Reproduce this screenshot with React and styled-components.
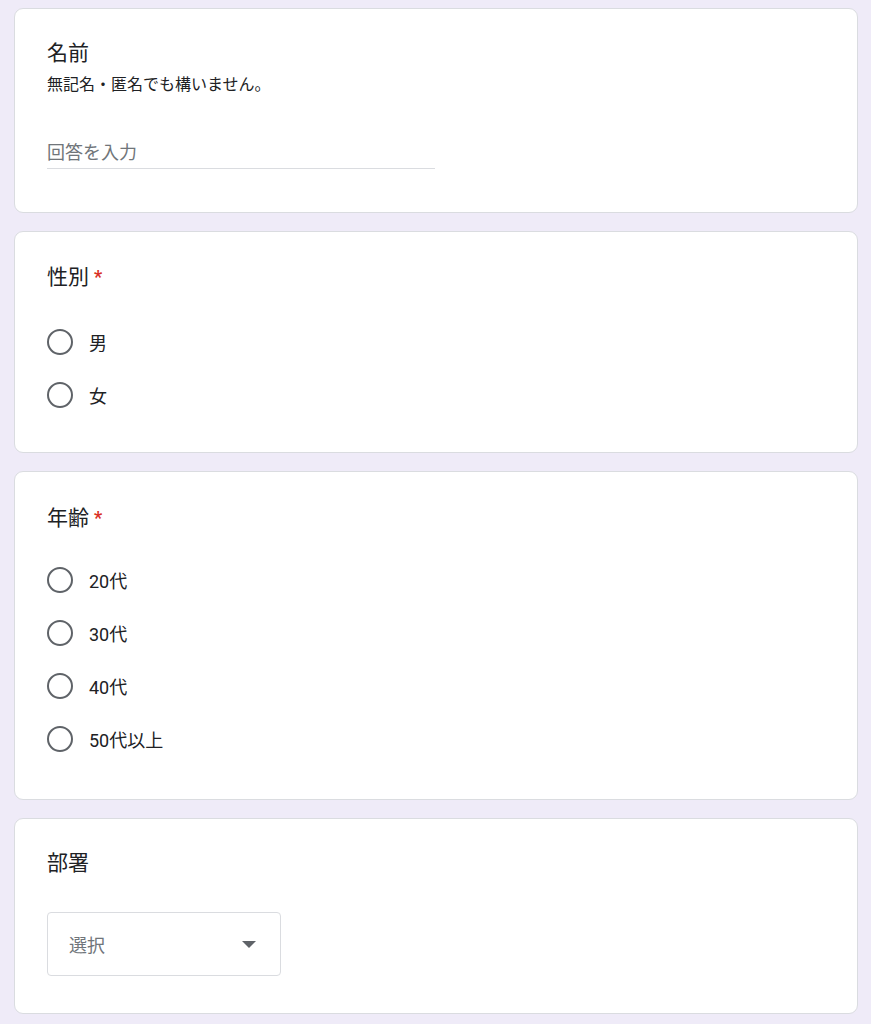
import { createGlobalStyle, styled } from "styled-components";

const GlobalStyle = createGlobalStyle`
  html, body {
    margin: 0;
    padding: 0;
    background: #efebf8;
    overflow: hidden;
  }
  body {
    font-family: Roboto, "Noto Sans CJK JP", sans-serif;
    color: #202124;
  }
`;

const Page = styled.div`
  display: flex;
  flex-direction: column;
  gap: 18px;
  padding: 8px 13px 0 14px;
`;

const Card = styled.section`
  background: #fff;
  border: 1px solid #dadce0;
  border-radius: 9px;
  padding: ${(p) => p.$top || 30}px 32px ${(p) => p.$bottom || 30}px;
`;

const Title = styled.h2`
  margin: 0;
  font-size: 21px;
  font-weight: 400;
  line-height: 28px;
  display: flex;
  align-items: center;
  gap: 5px;
`;

const Required = styled.span`
  color: #d93025;
  font-size: 18px;
  font-weight: 700;
`;

const Description = styled.p`
  margin: 8px 0 0;
  font-size: 16px;
  line-height: 20px;
`;

const TextInput = styled.input`
  display: block;
  margin-top: 45px;
  width: 388px;
  box-sizing: border-box;
  border: none;
  border-bottom: 1px solid #dadce0;
  padding: 0 0 4px;
  font-family: inherit;
  font-size: 18px;
  line-height: 24px;
  height: 29px;
  outline: none;
  color: #202124;
  &::placeholder {
    color: #70757a;
  }
`;

const Options = styled.div`
  display: flex;
  flex-direction: column;
  margin-top: ${(p) => p.$gap || 24}px;
`;

const Option = styled.label`
  display: flex;
  align-items: center;
  height: 53px;
  font-size: 18px;
  gap: 16px;
`;

const Radio = styled.span`
  width: 26px;
  height: 26px;
  box-sizing: border-box;
  border: 2px solid #5f6368;
  border-radius: 50%;
  flex-shrink: 0;
`;

const Select = styled.div`
  margin-top: 35px;
  width: 234px;
  height: 64px;
  box-sizing: border-box;
  border: 1px solid #dadce0;
  border-radius: 4px;
  display: flex;
  align-items: center;
  justify-content: space-between;
  padding: 0 24px 0 21px;
  font-size: 18px;
  color: #70757a;
`;

const Caret = styled.span`
  width: 0;
  height: 0;
  border-left: 7px solid transparent;
  border-right: 7px solid transparent;
  border-top: 7px solid #5f6368;
`;

const RadioQuestion = ({ title, required, options, top, gap, bottom }) => (
  <Card $top={top} $bottom={bottom}>
    <Title>
      {title}
      {required && <Required>*</Required>}
    </Title>
    <Options $gap={gap}>
      {options.map((o) => (
        <Option key={o}>
          <Radio />
          {o}
        </Option>
      ))}
    </Options>
  </Card>
);

const App = () => (
  <>
    <GlobalStyle />
    <Page>
      <Card $bottom={43}>
        <Title>名前</Title>
        <Description>無記名・匿名でも構いません。</Description>
        <TextInput placeholder="回答を入力" />
      </Card>
      <RadioQuestion title="性別" required options={["男", "女"]} top={31} bottom={31} />
      <RadioQuestion
        title="年齢"
        required
        options={["20代", "30代", "40代", "50代以上"]}
        top={32}
        gap={21}
        bottom={34}
      />
      <Card $bottom={37}>
        <Title>部署</Title>
        <Select>
          選択
          <Caret />
        </Select>
      </Card>
    </Page>
  </>
);

export default App;
